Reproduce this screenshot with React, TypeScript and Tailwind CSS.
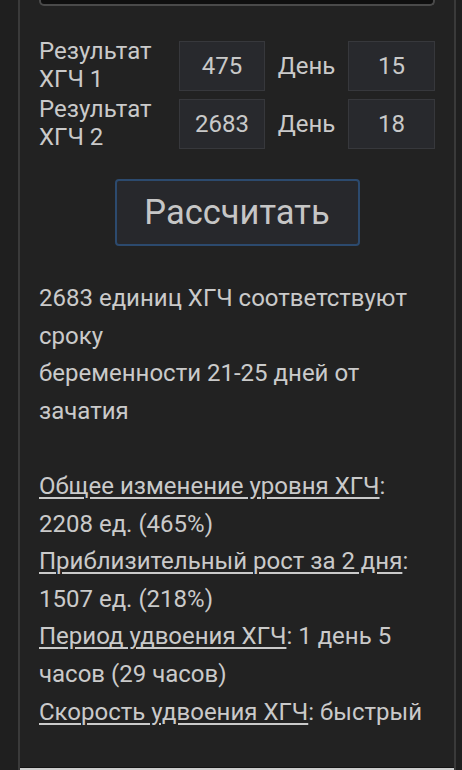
import React from 'react';

const rows = [
  { n: 1, value: '475', day: '15' },
  { n: 2, value: '2683', day: '18' },
];

const Cell = ({ children }: { children: React.ReactNode }) => (
  <div className="h-[50px] flex items-center justify-center bg-[#28292d] border border-[#37383c] text-[#c9c9c9]">
    {children}
  </div>
);

const Term = ({ children }: { children: React.ReactNode }) => (
  <span className="underline decoration-[1.5px] underline-offset-[3px]">{children}</span>
);

export default function App() {
  return (
    <div className="min-h-screen bg-[#1f1f1f] text-[#cacaca]" style={{ fontFamily: 'Roboto, "Noto Sans", sans-serif' }}>
      <div className="ml-[18px] w-[438px] border-x-2 border-[#3a3a3a] bg-[#222222]">
        <div className="mx-[19px] h-[6px] rounded-b-[5px] border-2 border-t-0 border-[#4a4a4a] bg-[#0f0f0f]" />

        <div className="px-[19px] pt-[32px] pb-[36px]">
          <div className="grid grid-cols-[140px_86px_83px_87px] gap-y-[3px] items-center text-[24px]">
            {rows.map((r) => (
              <React.Fragment key={r.n}>
                <div className="leading-[27.5px]">
                  Результат
                  <br />
                  ХГЧ {r.n}
                </div>
                <Cell>{r.value}</Cell>
                <div className="text-center">День</div>
                <Cell>{r.day}</Cell>
              </React.Fragment>
            ))}
          </div>

          <div className="flex justify-center mt-[28px]">
            <button className="w-[245px] h-[67px] rounded-[4px] border-2 border-[#2c4a6e] bg-[#27282c] text-[34.5px] text-[#c6c6c6]">
              Рассчитать
            </button>
          </div>

          <div className="mt-[34px] text-[24px] leading-[37.6px]">
            2683 единиц ХГЧ соответствуют сроку
            <br />
            беременности 21-25 дней от зачатия
            <br />
            <br />
            <Term>Общее изменение уровня ХГЧ</Term>: 2208 ед. (465%)
            <br />
            <Term>Приблизительный рост за 2 дня</Term>: 1507 ед. (218%)
            <br />
            <Term>Период удвоения ХГЧ</Term>: 1 день 5 часов (29 часов)
            <br />
            <Term>Скорость удвоения ХГЧ</Term>: быстрый
          </div>
        </div>

        <div className="h-[1px] bg-[#141414]" />
        <div className="h-[4px] bg-[#cfcfcf]" />
      </div>
    </div>
  );
}
